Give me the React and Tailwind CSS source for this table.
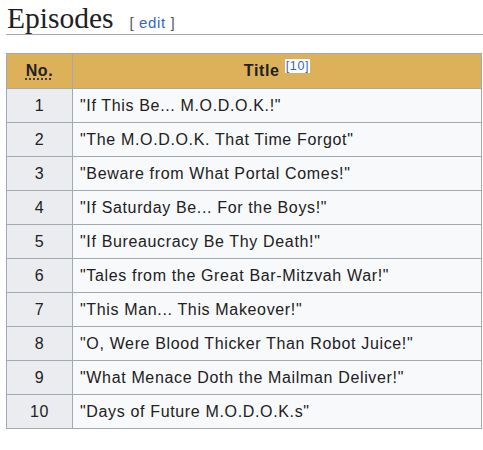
import React from 'react';

const episodes = [
  'If This Be... M.O.D.O.K.!',
  'The M.O.D.O.K. That Time Forgot',
  'Beware from What Portal Comes!',
  'If Saturday Be... For the Boys!',
  'If Bureaucracy Be Thy Death!',
  'Tales from the Great Bar-Mitzvah War!',
  'This Man... This Makeover!',
  'O, Were Blood Thicker Than Robot Juice!',
  'What Menace Doth the Mailman Deliver!',
  'Days of Future M.O.D.O.K.s',
];

const App = () => {
  return (
    <div className="w-[483px] h-[450px] bg-white overflow-hidden font-['Liberation_Sans',Arial,sans-serif] text-[#202122]">
      <div className="pl-[6px]">
        <div className="flex items-baseline border-b border-[#a2a9b1] pt-[1px] h-[35px]">
          <h2 className="font-['Liberation_Serif',Georgia,serif] text-[29.5px] leading-[34px] pl-[1px]">Episodes</h2>
          <span className="ml-[16px] text-[15px] tracking-[0.6px] text-[#54595d]">
            [ <span className="text-[#3366cc]">edit</span> ]
          </span>
        </div>
        <table className="mt-[18px] w-[476px] border-collapse border border-[#a2a9b1] bg-[#f8f9fa] text-[16px] tracking-[0.65px]">
          <thead>
            <tr className="h-[35px] bg-[#ddb05a]">
              <th className="w-[66px] border border-[#a2a9b1] font-bold">
                <span className="underline decoration-dotted underline-offset-[3px]">No.</span>
              </th>
              <th className="border border-[#a2a9b1] font-bold">
                Title{' '}
                <sup className="bg-white text-[#3366cc] font-normal text-[12.5px] px-[1px]">[10]</sup>
              </th>
            </tr>
          </thead>
          <tbody>
            {episodes.map((title, i) => (
              <tr key={i} className="h-[34px]">
                <td className="border border-[#a2a9b1] bg-[#eaecf0] text-center">{i + 1}</td>
                <td className="border border-[#a2a9b1] px-[7px]">"{title}"</td>
              </tr>
            ))}
          </tbody>
        </table>
      </div>
    </div>
  );
};

export default App;
